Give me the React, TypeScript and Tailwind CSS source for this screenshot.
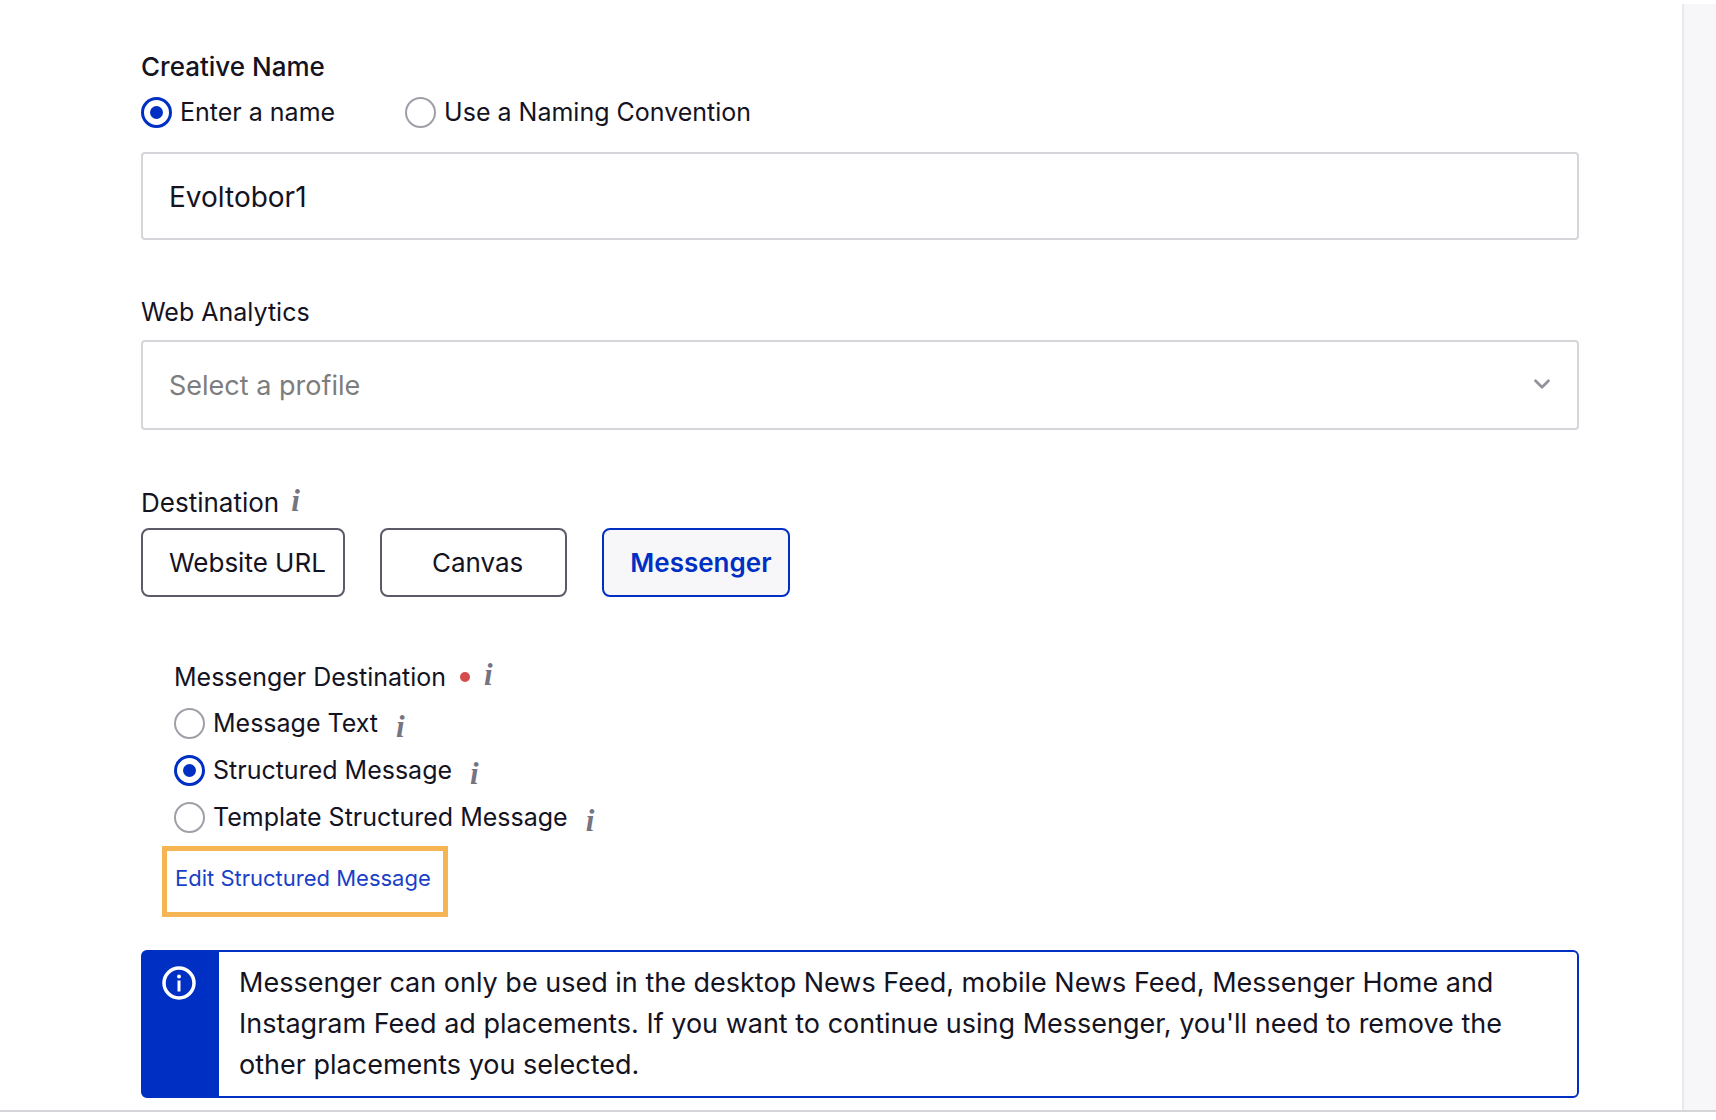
import { useState } from 'react'
import { ChevronDown } from 'lucide-react'

interface RadioOptionProps {
  name: string
  label: string
  checked: boolean
  onChange: () => void
}

interface InfoHintProps {
  about: string
  className: string
}

const DESTINATIONS = [
  { label: 'Website URL', className: 'pl-[26px] pr-[17px]' },
  { label: 'Canvas', className: 'pl-[50px] pr-[42px]' },
  { label: 'Messenger', className: 'pl-[26px] pr-[17px]' },
]

const MESSAGE_TYPES = ['Message Text', 'Structured Message', 'Template Structured Message']

function RadioOption({ name, label, checked, onChange }: RadioOptionProps) {
  return (
    <label className="flex items-center gap-2 text-[25px] leading-8">
      <input
        type="radio"
        name={name}
        checked={checked}
        onChange={onChange}
        className="flex size-[31px] shrink-0 appearance-none items-center justify-center rounded-full border-2 border-[#a09fa8] bg-white before:size-[13px] before:rounded-full checked:border-[3px] checked:border-[#002fc4] checked:before:bg-[#002fc4]"
      />
      {label}
    </label>
  )
}

function InfoHint({ about, className }: InfoHintProps) {
  return (
    <button
      type="button"
      aria-label={`About ${about}`}
      className={`font-['Liberation_Serif',serif] text-[31px] leading-8 font-bold text-[#757480] italic ${className}`}
    >
      i
    </button>
  )
}

export default function App() {
  const [nameMode, setNameMode] = useState('Enter a name')
  const [name, setName] = useState('Evoltobor1')
  const [destination, setDestination] = useState('Messenger')
  const [messageType, setMessageType] = useState('Structured Message')

  return (
    <div className="min-h-screen bg-white pt-1 font-['Inter',sans-serif] text-[26px] leading-8 text-[#14131f]">
      <div className="flex border-b-2 border-[#d5d5da]">
        <main className="min-w-0 flex-1 pt-[47px] pr-[103px] pb-3 pl-[141px]">
          <h2 className="font-medium">Creative Name</h2>
          <div className="mt-[13px] flex gap-[70px]">
            {['Enter a name', 'Use a Naming Convention'].map((mode) => (
              <RadioOption
                key={mode}
                name="name-mode"
                label={mode}
                checked={nameMode === mode}
                onChange={() => setNameMode(mode)}
              />
            ))}
          </div>
          <input
            aria-label="Creative Name"
            value={name}
            onChange={(e) => setName(e.target.value)}
            className="mt-6 block h-[88px] w-full rounded-[4px] border-2 border-[#d5d5da] px-[26px] pt-[2px] text-[28px] outline-none"
          />

          <label htmlFor="analytics" className="mt-14 block text-[25px]">
            Web Analytics
          </label>
          <div className="relative mt-3">
            <select
              id="analytics"
              defaultValue=""
              className="block h-[90px] w-full appearance-none rounded-[4px] border-2 border-[#d5d5da] bg-white px-[26px] pt-[2px] text-[27px] text-[#7d7d7d] outline-none"
            >
              <option value="">Select a profile</option>
            </select>
            <ChevronDown
              className="pointer-events-none absolute top-[31px] right-6 size-[26px] text-[#93929c]"
              strokeWidth={2.5}
            />
          </div>

          <div className="mt-[57px] flex items-center gap-3">
            <h3>Destination</h3>
            <InfoHint about="Destination" className="-mt-1" />
          </div>
          <div className="mt-[9px] flex gap-[35px]">
            {DESTINATIONS.map((item) => (
              <button
                key={item.label}
                type="button"
                onClick={() => setDestination(item.label)}
                className={`h-[69px] rounded-lg border-2 ${item.className} ${
                  destination === item.label
                    ? 'border-[#002fc4] bg-[#f7f7fa] font-semibold text-[#002fc4]'
                    : 'border-[#5b5a69] bg-white'
                }`}
              >
                {item.label}
              </button>
            ))}
          </div>

          <section className="mt-16 pl-[33px] text-[25px]">
            <div className="flex items-center gap-[14px]">
              <h3>Messenger Destination</h3>
              <span className="size-[10px] rounded-full bg-[#d64b4b]" />
              <InfoHint about="Messenger Destination" className="-mt-1" />
            </div>
            <div className="mt-[14px] flex flex-col gap-[15px]">
              {MESSAGE_TYPES.map((type) => (
                <div key={type} className="flex items-center gap-[18px]">
                  <RadioOption
                    name="message-type"
                    label={type}
                    checked={messageType === type}
                    onChange={() => setMessageType(type)}
                  />
                  <InfoHint about={type} className="-mb-1 pt-1" />
                </div>
              ))}
            </div>
          </section>
          <div className="mt-[13px] ml-[21px] flex h-[71px] w-fit border-[5px] border-[#f5b555] pt-[11px] pr-3 pl-2">
            <a href="#edit" className="text-[22px] leading-8 text-[#1a3fc8]">
              Edit Structured Message
            </a>
          </div>

          <div role="note" className="mt-[33px] flex rounded-md border-2 border-[#002fc4] bg-[#002fc4]">
            <div className="w-[76px] shrink-0 pt-[14px] pl-[19px]">
              <svg viewBox="0 0 34 34" className="size-[34px]" fill="none" aria-hidden="true">
                <circle cx="17" cy="17" r="15" stroke="white" strokeWidth="3.5" />
                <circle cx="17" cy="10.5" r="2" fill="white" />
                <path d="M17 14.5V25.5" stroke="white" strokeWidth="3" />
              </svg>
            </div>
            <p className="flex-1 rounded-r-[4px] bg-white pt-[10px] pr-5 pb-[11px] pl-5 text-[27px] leading-[41px]">
              Messenger can only be used in the desktop News Feed, mobile News Feed, Messenger Home and
              Instagram Feed ad placements. If you want to continue using Messenger, you'll need to
              remove the other placements you selected.
            </p>
          </div>
        </main>
        <aside className="w-[34px] shrink-0 border-l-2 border-[#e9e9ec] bg-[#f7f7fa]" />
      </div>
    </div>
  )
}
